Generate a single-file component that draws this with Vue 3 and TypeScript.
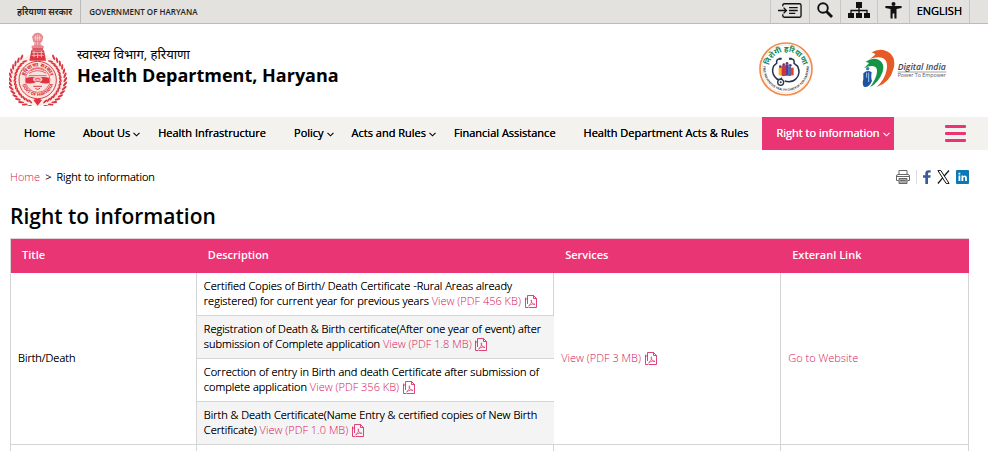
<script setup lang="ts">
interface MenuItem {
  label: string
  dropdown?: boolean
  active?: boolean
}

interface Certificate {
  text: string
  size: string
}

const menu: MenuItem[] = [
  { label: 'Home' },
  { label: 'About Us', dropdown: true },
  { label: 'Health Infrastructure' },
  { label: 'Policy', dropdown: true },
  { label: 'Acts and Rules', dropdown: true },
  { label: 'Financial Assistance' },
  { label: 'Health Department Acts & Rules' },
  { label: 'Right to information', dropdown: true, active: true },
]

const columns = ['Title', 'Description', 'Services', 'Exteranl Link']

const certificates: Certificate[] = [
  {
    text: 'Certified Copies of Birth/ Death Certificate -Rural Areas already registered) for current year for previous years',
    size: '456 KB',
  },
  {
    text: 'Registration of Death & Birth certificate(After one year of event) after submission of Complete application',
    size: '1.8 MB',
  },
  {
    text: 'Correction of entry in Birth and death Certificate after submission of complete application',
    size: '356 KB',
  },
  {
    text: 'Birth & Death Certificate(Name Entry & certified copies of New Birth Certificate)',
    size: '1.0 MB',
  },
]

// Wreath leaves, in degrees clockwise from the top of the emblem
const leafAngles = Array.from({ length: 15 }, (_, i) => 38 + i * 9)
</script>

<template>
  <svg class="defs" width="0" height="0" aria-hidden="true">
    <symbol id="pdf" viewBox="0 0 12 13">
      <g fill="none" stroke="currentColor" stroke-width="0.8">
        <path d="M3.5 12.5H0.500V2.500M2.500 9V0.500H8.500L11.500 3.500V12.500H4M8.500 0.500V3.500H11.500M0.500 5L2.500 3" />
        <path d="M3.5 11C5.5 9.5 7 7 6.6 5.2C6.2 4 5.600 5.500 6.600 7.200C7.400 8.800 9 9.800 10 9.400C10 8.600 6 8.800 3.500 11Z" stroke-width="0.6" />
      </g>
    </symbol>
  </svg>

  <div class="topbar">
    <div class="gov">
      <a href="#" class="gov-hi" lang="hi">हरियाणा सरकार</a>
      <a href="#" class="gov-en">GOVERNMENT OF HARYANA</a>
    </div>
    <div class="tools">
      <a href="#" class="tool skip" aria-label="Skip to main content">
        <svg width="24" height="17" viewBox="0 0 25 17" fill="none" stroke="#111" stroke-width="1.4">
          <path d="M5 4V3Q5 1.5 6.5 1.5H22.5Q24 1.5 24 3V14Q24 15.500 22.500 15.500H6.500Q5 15.500 5 14V12.500" />
          <path d="M0 8.500H8.500M5.800 5.500L8.800 8.500L5.800 11.500M11.500 5.500H20.500M11.500 8.500H20.500M11.500 11.500H18" />
        </svg>
      </a>
      <button type="button" class="tool search" aria-label="Search">
        <svg width="16" height="16" viewBox="0 0 16 16" fill="none" stroke="#111">
          <circle cx="6" cy="6" r="4.800" stroke-width="1.900" />
          <path d="M9.500 9.500L15 15" stroke-width="2.800" />
        </svg>
      </button>
      <a href="#" class="tool sitemap" aria-label="Sitemap">
        <svg width="22" height="17" viewBox="0 0 22 17" fill="#111">
          <path d="M8 0H14V6H8ZM0 11H6V16H0ZM8 11H14V16H8ZM16 11H22V16H16Z" />
          <path d="M11 5V12M3 12V8.500H19V12" fill="none" stroke="#111" stroke-width="1.300" />
        </svg>
      </a>
      <button type="button" class="tool access" aria-label="Accessibility">
        <svg width="17" height="17" viewBox="0 0 17 17" fill="#111">
          <circle cx="8.500" cy="2" r="2" />
          <path d="M0.400 4H16.600V6L11.500 7V16.500H9.400V11.500H7.600V16.500H5.500V7L0.400 6Z" />
        </svg>
      </button>
      <button type="button" class="tool lang">ENGLISH</button>
    </div>
  </div>

  <header class="masthead">
    <a href="#" class="brand">
      <svg class="emblem" width="58" height="74" viewBox="15 18 174 222" aria-hidden="true">
        <defs>
          <path id="ringTop" d="M61 162A40 40 0 0 1 141 162" />
          <path id="ringBottom" d="M53 162A48 48 0 0 0 149 162" />
        </defs>
        <circle cx="101" cy="162" r="78" fill="#fdeee8" />
        <g fill="#dc3440">
          <g v-for="a in leafAngles" :key="a">
            <g :transform="`rotate(${a} 101 162)`">
              <ellipse cx="97" cy="79" rx="9" ry="3.200" transform="rotate(28 97 79)" />
              <ellipse cx="97" cy="94" rx="8" ry="2.800" transform="rotate(-26 97 94)" />
            </g>
            <g :transform="`rotate(${-a} 101 162)`">
              <ellipse cx="105" cy="79" rx="9" ry="3.200" transform="rotate(-28 105 79)" />
              <ellipse cx="105" cy="94" rx="8" ry="2.800" transform="rotate(26 105 94)" />
            </g>
          </g>
          <path d="M88 222Q101 214 114 222L101 239Z" />
        </g>
        <g fill="#e88a90">
          <path d="M90 24Q101 16 112 24L118 32L114 48H88L84 32Z" />
          <path d="M92 46H110L113 60H89Z" />
          <path d="M83 59H119V67H83Z" />
          <path d="M85 66H117V72H85Z" fill="#d85b64" />
        </g>
        <path d="M95 28V44M101 26V45M107 28V44M89 36H113M93 50V57M101 48V57M109 50V57" stroke="#fbe4e2" stroke-width="2" />
        <path d="M82 73H120L126 104H76Z" fill="#dc3440" />
        <path d="M84 79H118M83 88H119M90 75V94M101 82V96M112 75V94" stroke="#f6b9b9" stroke-width="3" />
        <circle cx="101" cy="162" r="56" fill="#fbe5e0" stroke="#dc3844" stroke-width="3" />
        <circle cx="101" cy="162" r="37" fill="#fae3de" stroke="#dc3844" stroke-width="2" />
        <g class="seal-text" fill="#d91f2d">
          <text font-size="16" lang="hi"><textPath href="#ringTop" startOffset="50%" text-anchor="middle">हरियाणा सरकार</textPath></text>
          <text font-size="13"><textPath href="#ringBottom" startOffset="50%" text-anchor="middle">GOVT OF HARYANA</textPath></text>
        </g>
        <path d="M66 156Q83 150 101 156Q119 150 136 156L136 170Q120 177 101 166Q82 177 66 170Z" fill="#df3441" />
        <path d="M75 142Q101 126 127 142M81 134Q101 121 121 134M74 149H128" fill="none" stroke="#e2616a" stroke-width="3" />
        <ellipse cx="101" cy="160" rx="14" ry="8" fill="#f7c6c3" />
        <path d="M93 160Q101 154 109 160M95 165Q101 168 107 165M88 181H114M94 187Q101 194 108 187" fill="none" stroke="#dc3b45" stroke-width="3" />
      </svg>
      <span class="brand-text">
        <span class="brand-hi" lang="hi">स्वास्थ्य विभाग, हरियाणा</span>
        <strong class="brand-en">Health Department, Haryana</strong>
      </span>
    </a>
    <div class="partners">
      <a href="#" aria-label="Nirogi Haryana">
        <svg width="56" height="56" viewBox="0 0 168 168">
          <defs>
            <path id="sealTop" d="M32 84A52 52 0 0 1 136 84" />
            <path id="sealBottom" d="M17 70A68 68 0 1 0 151 70" />
          </defs>
          <circle cx="84" cy="84" r="78" fill="#fff" stroke="#ee8c50" stroke-width="5" />
          <circle cx="84" cy="84" r="72" fill="none" stroke="#f7c6a4" stroke-width="1.500" />
          <g class="seal-text">
            <text font-size="23" fill="#178558" lang="hi"><textPath href="#sealTop" startOffset="50%" text-anchor="middle">निरोगी हरियाणा</textPath></text>
            <text font-size="9" fill="#333"><textPath href="#sealBottom" startOffset="50%" text-anchor="middle">FREE PREVENTIVE HEALTH CHECKUP FOR HARYANA</textPath></text>
          </g>
          <path d="M66 53Q54 54 56 67L47 75Q39 93 51 108Q61 122 72 110M98 53Q111 54 108 67L119 76Q129 98 114 113Q102 126 80 120" fill="none" stroke="#25344a" stroke-width="4.500" />
          <path d="M63 53H71M93 53H101" stroke="#25344a" stroke-width="6" />
          <circle cx="68" cy="124" r="9" fill="#fff" stroke="#25344a" stroke-width="4" />
          <circle cx="68" cy="124" r="3" fill="#25344a" />
          <path d="M62 80H72V103H62Z" fill="#f0b33b" />
          <path d="M71 74H83V105H71Z" fill="#cf343b" />
          <path d="M82 70H92V104H82Z" fill="#5d3798" />
          <path d="M91 76H99V105H91Z" fill="#2d72b7" />
          <path d="M98 80H107V103H98Z" fill="#e3403b" />
          <g fill="#5a3b78"><circle cx="67" cy="77" r="4" /><circle cx="77" cy="71" r="4" /><circle cx="87" cy="67" r="4" /><circle cx="97" cy="73" r="4" /></g>
        </svg>
      </a>
      <a href="#" aria-label="Digital India">
        <svg width="86" height="40" viewBox="338 152 258 120">
          <path d="M364 163Q398 145 422 165Q440 181 433 210Q422 254 382 266Q406 244 412 214Q417 187 400 179Q386 173 362 181Q375 174 378 168Q372 162 364 163Z" fill="#e65b25" />
          <path d="M349 190Q370 176 389 185Q407 195 400 220Q388 253 362 266Q382 239 383 220Q384 204 369 203Q358 202 344 210Q354 200 359 194Z" fill="#149447" />
          <path d="M342 225Q355 213 367 222Q364 238 368 248Q360 267 346 266Q337 262 342 242Z" fill="#1e53a1" />
          <circle cx="355" cy="211" r="5" fill="#3979bd" />
          <path d="M352 223V238M358 223V251" stroke="#bcd5ee" stroke-width="2.500" />
          <g class="di-text">
            <text x="445" y="216" font-size="26" font-style="italic" font-weight="600" fill="#44444d">Digital India</text>
            <text x="445" y="237" font-size="16" font-weight="500" fill="#55555d">Power To Empower</text>
          </g>
          <path d="M445 221H591" stroke="#777" stroke-width="2" />
        </svg>
      </a>
    </div>
  </header>

  <nav class="nav" aria-label="Main">
    <ul class="menu">
      <li v-for="item in menu" :key="item.label">
        <a href="#" :class="{ active: item.active }">
          {{ item.label }}
          <svg v-if="item.dropdown" class="chevron" width="7" height="5" viewBox="0 0 7 5" aria-hidden="true">
            <path d="M0.500 0.800L3.500 3.800L6.500 0.800" fill="none" stroke="currentColor" stroke-width="1.100" />
          </svg>
        </a>
      </li>
    </ul>
    <button type="button" class="burger" aria-label="More"><span /><span /><span /></button>
  </nav>

  <main class="content">
    <div class="crumb-row">
      <nav class="crumbs" aria-label="Breadcrumb">
        <a href="#">Home</a><span>&gt;</span><span>Right to information</span>
      </nav>
      <div class="share">
        <button type="button" class="print" aria-label="Print">
          <svg width="14" height="14" viewBox="0 0 14 14" fill="none" stroke="#666">
            <path d="M3 4.500V0.500H11V4.500M2.500 10.500H0.500V6Q0.500 4.500 2 4.500H12Q13.500 4.500 13.500 6V10.500H11.500" />
            <path d="M3 8.500H11V13.500H3Z" fill="#aaa" />
            <path d="M1 6.500H13M4.500 10.500H9.500" />
          </svg>
        </button>
        <a href="#" aria-label="Facebook">
          <svg width="8" height="14" viewBox="0 0 8 14"><path d="M2.300 14V7.800H0V5.300H2.300V3.500Q2.300 0.200 5.600 0.200H7.700V2.600H6.200Q5 2.600 5 3.900V5.300H7.700L7.300 7.800H5V14Z" fill="#3c5a99" /></svg>
        </a>
        <a href="#" aria-label="X">
          <svg width="13" height="14" viewBox="0 0 13 14" fill="none" stroke="#111">
            <path d="M0.900 0.600H3.900L12.100 13.400H9.100Z" />
            <path d="M12 0.500L7.200 6M5.700 7.900L0.900 13.500" stroke-width="1.200" />
          </svg>
        </a>
        <a href="#" aria-label="LinkedIn">
          <svg width="13" height="14" viewBox="0 0 13 14">
            <rect width="13" height="14" rx="1" fill="#0a78b5" />
            <path d="M2.500 5.500H4.300V11H2.500ZM2.500 2.800H4.300V4.500H2.500ZM5.500 5.500H7.200V6.300Q8 5.300 9.100 5.400Q10.900 5.500 10.900 7.800V11H9.100V8.200Q9.100 7 8.300 7Q7.300 7 7.300 8.300V11H5.500Z" fill="#fff" />
          </svg>
        </a>
      </div>
    </div>

    <h1>Right to information</h1>

    <table>
      <colgroup>
        <col class="c-title"><col class="c-desc"><col class="c-serv"><col>
      </colgroup>
      <thead>
        <tr><th v-for="c in columns" :key="c" scope="col">{{ c }}</th></tr>
      </thead>
      <tbody>
        <tr v-for="(cert, i) in certificates" :key="cert.size">
          <td v-if="i === 0" :rowspan="certificates.length">Birth/Death</td>
          <td :class="{ shaded: i % 2 === 1, open: i > 0 }">
            {{ cert.text }}
            <a href="#" class="file">View (PDF {{ cert.size }}) <svg class="pdf" width="12" height="13" aria-hidden="true"><use href="#pdf" /></svg></a>
          </td>
          <template v-if="i === 0">
            <td :rowspan="certificates.length">
              <a href="#" class="file">View (PDF 3 MB) <svg class="pdf" width="12" height="13" aria-hidden="true"><use href="#pdf" /></svg></a>
            </td>
            <td :rowspan="certificates.length"><a href="#">Go to Website</a></td>
          </template>
        </tr>
        <tr class="next"><td /><td /><td /><td /></tr>
      </tbody>
    </table>
  </main>
</template>

<style>
body {
  background: #fff;
  color: #000;
  font-family: "Open Sans", "Noto Sans", "Noto Sans Devanagari", sans-serif;
  font-size: 11px;
  line-height: 15px;
}
</style>

<style scoped>
* {
  box-sizing: border-box;
}

a {
  color: #d8145a;
  text-decoration: none;
}

button {
  padding: 0;
  border: 0;
  background: none;
  color: inherit;
  font: inherit;
}

svg {
  display: block;
}

.defs {
  position: absolute;
}

.topbar {
  display: flex;
  justify-content: space-between;
  height: 24px;
  padding-right: 18px;
  border-bottom: 1px solid #bdbbb9;
  background: #e3e2df;
}

.gov,
.tools,
.tool {
  display: flex;
  align-items: center;
}

.gov,
.tools {
  align-items: stretch;
}

.gov a {
  padding: 4px 8px 4px 17px;
  color: #222;
  font-size: 8px;
  font-weight: 600;
}

.gov .gov-hi {
  border-right: 1px solid #bdbbb9;
  font-size: 9px;
}

.gov .gov-en {
  padding-left: 8px;
}

.tool {
  justify-content: center;
  padding: 0 7px 3px;
  border-left: 1px solid #c9c7c4;
  color: #000;
}

.lang {
  border-right: 1px solid #c9c7c4;
  text-shadow: 0 0 currentColor;
}

.masthead {
  display: flex;
  justify-content: space-between;
  align-items: center;
  height: 93px;
  padding: 0 40px 3px 9px;
}

.brand {
  display: flex;
  align-items: center;
  gap: 10px;
  color: #000;
}

.brand-text {
  display: flex;
  flex-direction: column;
  padding-bottom: 7px;
}

.brand-hi {
  font-size: 13px;
  line-height: 18px;
}

.brand-en {
  font-size: 18px;
  line-height: 24px;
}

.seal-text {
  font-family: "Noto Sans", sans-serif;
  font-weight: 700;
}

.di-text {
  font-family: "Open Sans", sans-serif;
}

.partners {
  display: flex;
  align-items: center;
  gap: 48px;
}

.nav {
  display: flex;
  justify-content: space-between;
  align-items: center;
  padding: 0 22px 0 10px;
  background: #f4f2ee;
}

.menu {
  display: flex;
  margin: 0;
  padding: 0;
  list-style: none;
}

.menu a {
  display: block;
  position: relative;
  padding: 8px 14px 10px;
  color: #000;
  text-shadow: 0 0 currentColor;
  white-space: nowrap;
}

.menu .active {
  background: #ea3575;
  color: #fff;
}

.chevron {
  position: absolute;
  top: 15px;
  right: 4px;
}

.burger {
  display: grid;
  gap: 4px;
  width: 21px;
}

.burger span {
  height: 3px;
  border-radius: 1px;
  background: #ea3575;
}

.content {
  padding: 19px 19px 0 10px;
}

.crumb-row {
  display: flex;
  justify-content: space-between;
  align-items: center;
}

.crumbs {
  display: flex;
  gap: 5px;
  font-weight: 300;
  text-shadow: 0 0 currentColor;
}

.crumbs a,
td a {
  text-shadow: none;
}

.share {
  display: flex;
  align-items: center;
  gap: 6px;
}

.print {
  padding-right: 6px;
  border-right: 1px solid #ddd;
}

h1 {
  margin: 17px 0 7px;
  font-size: 21px;
  font-weight: 600;
  line-height: 30px;
}

table {
  width: 100%;
  border-top: 1px solid #e3d3d9;
  border-left: 1px solid #d5d5d5;
  border-spacing: 0;
  table-layout: fixed;
}

.c-title {
  width: 19.4%;
}

.c-desc {
  width: 37.3%;
}

.c-serv {
  width: 23.7%;
}

th {
  padding: 8px 11px 11px;
  background: #ea3575;
  color: #fff;
  font-weight: 600;
  text-align: left;
}

td {
  padding: 5px 7px 7px;
  border-right: 1px solid #d5d5d5;
  border-bottom: 1px solid #d5d5d5;
  font-weight: 300;
  text-shadow: 0 0 currentColor;
}

.open {
  border-right: 0;
}

.shaded {
  background: #f4f4f4;
}

.file {
  white-space: nowrap;
}

.pdf {
  display: inline-block;
  margin: 0 0 -3px 1px;
  vertical-align: baseline;
}

.next td {
  padding: 3px 7px;
  border-bottom: 0;
}
</style>
